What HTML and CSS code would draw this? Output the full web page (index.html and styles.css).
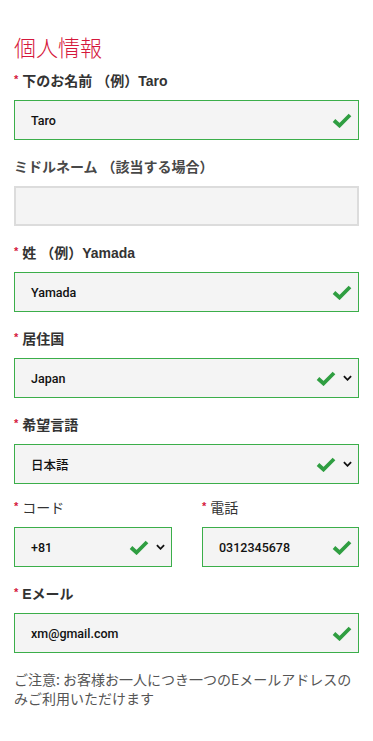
FILE: index.html
```html
<!DOCTYPE html>
<html lang="ja">
<head>
<meta charset="utf-8">
<link rel="stylesheet" href="styles.css">
</head>
<body>
<main class="form">
  <h1 class="title">個人情報</h1>

  <div class="field">
    <label class="label"><span class="req">*</span>下のお名前 （例）Taro</label>
    <div class="input valid"><span class="value">Taro</span>
      <svg class="check" viewBox="0 0 20 15"><polyline points="2,7.5 7.5,12.5 18,2"/></svg>
    </div>
  </div>

  <div class="field">
    <label class="label plain">ミドルネーム （該当する場合）</label>
    <div class="input empty"></div>
  </div>

  <div class="field">
    <label class="label"><span class="req">*</span>姓 （例）Yamada</label>
    <div class="input valid"><span class="value">Yamada</span>
      <svg class="check" viewBox="0 0 20 15"><polyline points="2,7.5 7.5,12.5 18,2"/></svg>
    </div>
  </div>

  <div class="field">
    <label class="label"><span class="req">*</span>居住国</label>
    <div class="input valid select"><span class="value">Japan</span>
      <svg class="check" viewBox="0 0 20 15"><polyline points="2,7.5 7.5,12.5 18,2"/></svg>
      <svg class="chev" viewBox="0 0 10 6"><polyline points="1,1 5,5 9,1"/></svg>
    </div>
  </div>

  <div class="field">
    <label class="label"><span class="req">*</span>希望言語</label>
    <div class="input valid select"><span class="value">日本語</span>
      <svg class="check" viewBox="0 0 20 15"><polyline points="2,7.5 7.5,12.5 18,2"/></svg>
      <svg class="chev" viewBox="0 0 10 6"><polyline points="1,1 5,5 9,1"/></svg>
    </div>
  </div>

  <div class="row">
    <div class="field code">
      <label class="label"><span class="req">*</span><span class="light">コード</span></label>
      <div class="input valid select"><span class="value">+81</span>
        <svg class="check" viewBox="0 0 20 15"><polyline points="2,7.5 7.5,12.5 18,2"/></svg>
        <svg class="chev" viewBox="0 0 10 6"><polyline points="1,1 5,5 9,1"/></svg>
      </div>
    </div>
    <div class="field phone">
      <label class="label"><span class="req">*</span><span class="light">電話</span></label>
      <div class="input valid"><span class="value">0312345678</span>
        <svg class="check" viewBox="0 0 20 15"><polyline points="2,7.5 7.5,12.5 18,2"/></svg>
      </div>
    </div>
  </div>

  <div class="field">
    <label class="label"><span class="req">*</span>Eメール</label>
    <div class="input valid"><span class="value">xm@gmail.com</span>
      <svg class="check" viewBox="0 0 20 15"><polyline points="2,7.5 7.5,12.5 18,2"/></svg>
    </div>
  </div>

  <p class="note">ご注意: お客様お一人につき一つのEメールアドレスのみご利用いただけます</p>
</main>
</body>
</html>
```

FILE: styles.css
```css
html, body {
  margin: 0;
  padding: 0;
  background: #fff;
}
body {
  font-family: "Liberation Sans", Arial, "Noto Sans CJK JP", sans-serif;
  color: #333;
}
.form {
  padding: 32px 14px 20px 14px;
}
.title {
  margin: 0 0 10px 0;
  font-family: "Noto Sans CJK JP", sans-serif;
  font-weight: 300;
  font-size: 22px;
  line-height: 28px;
  color: #d5183c;
}
.field {
  margin-bottom: 16px;
}
.label {
  display: flex;
  align-items: center;
  height: 20px;
  margin-bottom: 10px;
  font-family: "Liberation Sans", Arial, "Noto Sans CJK JP", sans-serif;
  font-weight: bold;
  font-size: 14px;
  color: #333;
}
.label.plain {
  color: #484848;
}
.label .light {
  font-weight: normal;
  font-size: 14px;
}
.req {
  color: #d5183c;
  font-size: 11px;
  font-weight: bold;
  margin-right: 4px;
  position: relative;
  top: -1px;
}
.input {
  box-sizing: border-box;
  height: 40px;
  display: flex;
  align-items: center;
  padding: 0 6px 0 16px;
  background: #f4f4f4;
  border: 1px solid #c8c8c8;
}
.input.empty {
  border: 2px solid #dcdcdc;
}
.input.valid {
  border: 1px solid #3bae4a;
}
.value {
  flex: 1;
  font-family: "Roboto", "Liberation Sans", "Noto Sans CJK JP", sans-serif;
  font-weight: 500;
  font-size: 12.5px;
  color: #111;
}
.check {
  width: 20px;
  height: 15px;
}
.check polyline {
  fill: none;
  stroke: #2f9e41;
  stroke-width: 3.8;
  stroke-linejoin: miter;
}
.chev {
  width: 9px;
  height: 6px;
  margin-left: 7px;
}
.chev polyline {
  fill: none;
  stroke: #111;
  stroke-width: 2;
}
.select {
  padding-right: 6px;
}
.row {
  display: flex;
  justify-content: space-between;
  margin-top: -3px;
}
.field.code {
  width: 158px;
}
.field.phone {
  width: 157px;
}
.note {
  margin: 17px 0 0 0;
  font-family: "Noto Sans CJK JP", sans-serif;
  font-size: 14px;
  line-height: 19px;
  color: #555;
}
```
